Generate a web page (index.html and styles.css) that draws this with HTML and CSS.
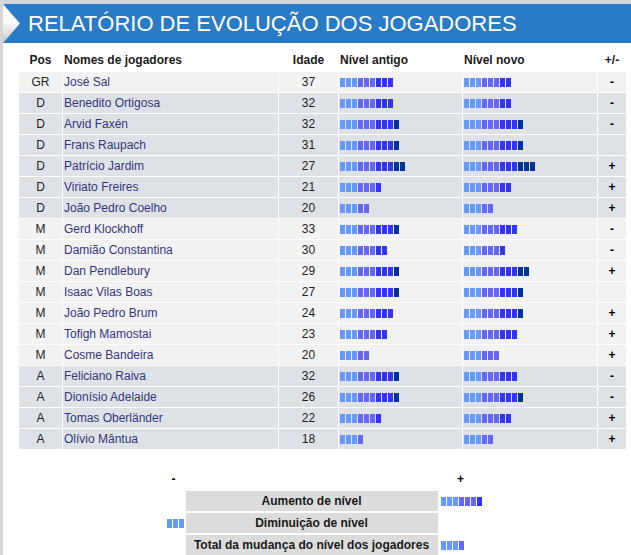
FILE: index.html
```html
<!DOCTYPE html>
<html lang="pt">
<head>
<meta charset="utf-8">
<title>Relatório de evolução dos jogadores</title>
<link rel="stylesheet" href="styles.css">
</head>
<body>
<div class="page">
  <div class="banner">
    <svg class="arrow" width="18" height="39" viewBox="0 0 18 39">
      <defs>
        <linearGradient id="ag" x1="0" y1="0" x2="0" y2="1">
          <stop offset="0" stop-color="#ffffff"/>
          <stop offset="0.45" stop-color="#fafafa"/>
          <stop offset="1" stop-color="#c9c9c9"/>
        </linearGradient>
      </defs>
      <polygon points="0,0 17,19.5 0,39" fill="url(#ag)"/>
    </svg>
    <h1 class="title">RELATÓRIO DE EVOLUÇÃO DOS JOGADORES</h1>
  </div>
  <div class="content">
    <table class="players">
      <colgroup>
        <col class="w-pos"><col class="w-name"><col class="w-age"><col class="w-old"><col class="w-new"><col class="w-sign">
      </colgroup>
      <thead>
        <tr><th>Pos</th><th class="left">Nomes de jogadores</th><th>Idade</th><th class="left">Nível antigo</th><th class="left">Nível novo</th><th>+/-</th></tr>
      </thead>
      <tbody>
        <tr class="lt"><td>GR</td><td class="name">José Sal</td><td>37</td><td><div class="bar"><i></i><i></i><i></i><i></i><i></i><i></i><i></i><i></i><i></i></div></td><td><div class="bar"><i></i><i></i><i></i><i></i><i></i><i></i><i></i><i></i></div></td><td class="sign">-</td></tr>
        <tr class="dk"><td>D</td><td class="name">Benedito Ortigosa</td><td>32</td><td><div class="bar"><i></i><i></i><i></i><i></i><i></i><i></i><i></i><i></i><i></i></div></td><td><div class="bar"><i></i><i></i><i></i><i></i><i></i><i></i><i></i><i></i></div></td><td class="sign">-</td></tr>
        <tr class="dk"><td>D</td><td class="name">Arvid Faxén</td><td>32</td><td><div class="bar"><i></i><i></i><i></i><i></i><i></i><i></i><i></i><i></i><i></i><i></i></div></td><td><div class="bar"><i></i><i></i><i></i><i></i><i></i><i></i><i></i><i></i><i></i><i></i></div></td><td class="sign">-</td></tr>
        <tr class="dk"><td>D</td><td class="name">Frans Raupach</td><td>31</td><td><div class="bar"><i></i><i></i><i></i><i></i><i></i><i></i><i></i><i></i><i></i><i></i></div></td><td><div class="bar"><i></i><i></i><i></i><i></i><i></i><i></i><i></i><i></i><i></i><i></i></div></td><td class="sign"></td></tr>
        <tr class="dk"><td>D</td><td class="name">Patrício Jardim</td><td>27</td><td><div class="bar"><i></i><i></i><i></i><i></i><i></i><i></i><i></i><i></i><i></i><i></i><i></i></div></td><td><div class="bar"><i></i><i></i><i></i><i></i><i></i><i></i><i></i><i></i><i></i><i></i><i></i><i></i></div></td><td class="sign">+</td></tr>
        <tr class="dk"><td>D</td><td class="name">Viriato Freires</td><td>21</td><td><div class="bar"><i></i><i></i><i></i><i></i><i></i><i></i><i></i></div></td><td><div class="bar"><i></i><i></i><i></i><i></i><i></i><i></i><i></i><i></i></div></td><td class="sign">+</td></tr>
        <tr class="dk"><td>D</td><td class="name">João Pedro Coelho</td><td>20</td><td><div class="bar"><i></i><i></i><i></i><i></i><i></i></div></td><td><div class="bar"><i></i><i></i><i></i><i></i><i></i></div></td><td class="sign">+</td></tr>
        <tr class="lt"><td>M</td><td class="name">Gerd Klockhoff</td><td>33</td><td><div class="bar"><i></i><i></i><i></i><i></i><i></i><i></i><i></i><i></i><i></i><i></i></div></td><td><div class="bar"><i></i><i></i><i></i><i></i><i></i><i></i><i></i><i></i><i></i></div></td><td class="sign">-</td></tr>
        <tr class="lt"><td>M</td><td class="name">Damião Constantina</td><td>30</td><td><div class="bar"><i></i><i></i><i></i><i></i><i></i><i></i><i></i><i></i></div></td><td><div class="bar"><i></i><i></i><i></i><i></i><i></i><i></i><i></i></div></td><td class="sign">-</td></tr>
        <tr class="lt"><td>M</td><td class="name">Dan Pendlebury</td><td>29</td><td><div class="bar"><i></i><i></i><i></i><i></i><i></i><i></i><i></i><i></i><i></i><i></i></div></td><td><div class="bar"><i></i><i></i><i></i><i></i><i></i><i></i><i></i><i></i><i></i><i></i><i></i></div></td><td class="sign">+</td></tr>
        <tr class="lt"><td>M</td><td class="name">Isaac Vilas Boas</td><td>27</td><td><div class="bar"><i></i><i></i><i></i><i></i><i></i><i></i><i></i><i></i><i></i><i></i></div></td><td><div class="bar"><i></i><i></i><i></i><i></i><i></i><i></i><i></i><i></i><i></i><i></i></div></td><td class="sign"></td></tr>
        <tr class="lt"><td>M</td><td class="name">João Pedro Brum</td><td>24</td><td><div class="bar"><i></i><i></i><i></i><i></i><i></i><i></i><i></i><i></i><i></i></div></td><td><div class="bar"><i></i><i></i><i></i><i></i><i></i><i></i><i></i><i></i><i></i><i></i></div></td><td class="sign">+</td></tr>
        <tr class="lt"><td>M</td><td class="name">Tofigh Mamostai</td><td>23</td><td><div class="bar"><i></i><i></i><i></i><i></i><i></i><i></i><i></i><i></i></div></td><td><div class="bar"><i></i><i></i><i></i><i></i><i></i><i></i><i></i><i></i><i></i></div></td><td class="sign">+</td></tr>
        <tr class="lt"><td>M</td><td class="name">Cosme Bandeira</td><td>20</td><td><div class="bar"><i></i><i></i><i></i><i></i><i></i></div></td><td><div class="bar"><i></i><i></i><i></i><i></i><i></i><i></i></div></td><td class="sign">+</td></tr>
        <tr class="dk"><td>A</td><td class="name">Feliciano Raiva</td><td>32</td><td><div class="bar"><i></i><i></i><i></i><i></i><i></i><i></i><i></i><i></i><i></i><i></i></div></td><td><div class="bar"><i></i><i></i><i></i><i></i><i></i><i></i><i></i><i></i><i></i></div></td><td class="sign">-</td></tr>
        <tr class="dk"><td>A</td><td class="name">Dionísio Adelaide</td><td>26</td><td><div class="bar"><i></i><i></i><i></i><i></i><i></i><i></i><i></i><i></i><i></i><i></i></div></td><td><div class="bar"><i></i><i></i><i></i><i></i><i></i><i></i><i></i><i></i><i></i><i></i></div></td><td class="sign">-</td></tr>
        <tr class="dk"><td>A</td><td class="name">Tomas Oberländer</td><td>22</td><td><div class="bar"><i></i><i></i><i></i><i></i><i></i><i></i><i></i></div></td><td><div class="bar"><i></i><i></i><i></i><i></i><i></i><i></i><i></i><i></i></div></td><td class="sign">+</td></tr>
        <tr class="dk"><td>A</td><td class="name">Olívio Mântua</td><td>18</td><td><div class="bar"><i></i><i></i><i></i><i></i></div></td><td><div class="bar"><i></i><i></i><i></i><i></i><i></i></div></td><td class="sign">+</td></tr>
      </tbody>
    </table>

    <table class="legend">
      <colgroup><col class="l-left"><col class="l-mid"><col class="l-right"></colgroup>
      <tr class="lhead"><td>-</td><td class="empty"></td><td>+</td></tr>
      <tr><td></td><td class="box">Aumento de nível</td><td class="rbar"><div class="bar"><i></i><i></i><i></i><i></i><i></i><i></i><i></i></div></td></tr>
      <tr><td class="lbar"><div class="bar end"><i></i><i></i><i></i></div></td><td class="box">Diminuição de nível</td><td></td></tr>
      <tr><td></td><td class="box">Total da mudança do nível dos jogadores</td><td class="rbar"><div class="bar"><i></i><i></i><i></i><i></i></div></td></tr>
    </table>
  </div>
</div>
</body>
</html>
```
FILE: styles.css
```css
html, body {
  margin: 0;
  padding: 0;
}
body {
  background: #d6d6d6;
  font-family: "Liberation Sans", Arial, sans-serif;
  font-size: 12px;
  color: #1e1e1e;
}
.page {
  margin: 4px 0 0 3px;
  background: #ffffff;
  height: 551px;
  overflow: hidden;
}
.banner {
  display: flex;
  align-items: center;
  height: 39px;
  background: #2a7bc6;
}
.arrow {
  display: block;
  flex: none;
}
.title {
  margin: 0 0 0 7px;
  font-size: 22px;
  font-weight: normal;
  color: #ffffff;
  line-height: 39px;
  white-space: nowrap;
}
.content {
  padding: 6px 0 0 15px;
  width: 609px;
}
.players {
  table-layout: fixed;
  border-collapse: separate;
  border-spacing: 1px;
  width: 609px;
}
.w-pos { width: 43px; }
.w-name { width: 215px; }
.w-age { width: 59px; }
.w-old { width: 123px; }
.w-new { width: 134px; }
.w-sign { width: 28px; }
.players th, .players td {
  height: 20px;
  padding: 0;
  text-align: center;
  vertical-align: middle;
  white-space: nowrap;
  overflow: hidden;
  line-height: 20px;
}
.players th {
  height: 21px;
  font-weight: bold;
  color: #1a1a1a;
  line-height: 21px;
}
.players th.left {
  text-align: left;
  padding-left: 1px;
}
.players td:nth-child(4), .players td:nth-child(5) {
  padding-left: 1px;
}
.players td.name {
  text-align: left;
  padding-left: 1px;
  color: #35357f;
}
.players td.sign {
  font-weight: bold;
  color: #000;
}
tr.lt td { background: #f2f2f2; }
tr.dk td { background: #dee2e6; }

.bar {
  display: flex;
  gap: 1px;
  height: 9px;
}
.bar.end {
  justify-content: flex-end;
}
.bar i {
  display: block;
  width: 5px;
  height: 9px;
  background: #6699ff;
}
.bar i:nth-child(n+4) { background: #6666ff; }
.bar i:nth-child(n+7) { background: #3333ff; }
.bar i:nth-child(n+10) { background: #003399; }

.legend {
  margin: 17px auto 0;
  border-collapse: separate;
  border-spacing: 2px;
  table-layout: fixed;
  width: 322px;
}
.l-left { width: 20px; }
.l-mid { width: 252px; }
.l-right { width: 42px; }
.legend td {
  height: 20px;
  padding: 0;
  vertical-align: middle;
  text-align: center;
  font-weight: bold;
  color: #1a1a1a;
  line-height: 20px;
}
.legend td.box {
  background: #dcdcdc;
  white-space: nowrap;
}
.legend td.rbar {
  padding-left: 1px;
}
.legend .lhead td {
  color: #000;
}
```
